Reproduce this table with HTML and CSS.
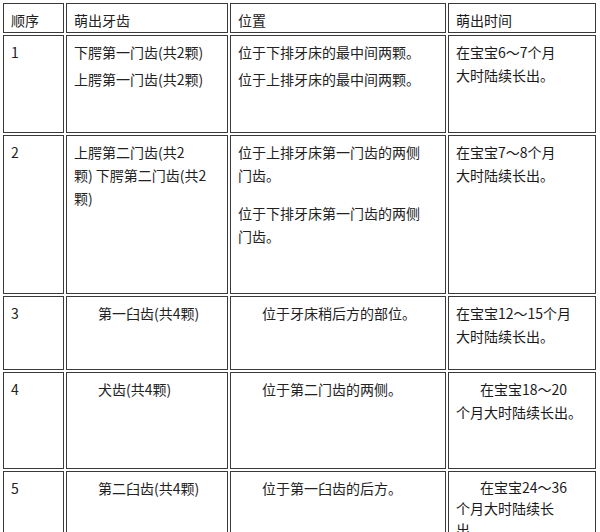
FILE: index.html
```html
<!DOCTYPE html>
<html lang="zh-CN">
<head>
<meta charset="utf-8">
<title>萌出牙齿</title>
<link rel="stylesheet" href="styles.css">
</head>
<body>
<table class="teeth">
  <colgroup>
    <col class="c1"><col class="c2"><col class="c3"><col class="c4">
  </colgroup>
  <tr class="r-head">
    <td>顺序</td>
    <td>萌出牙齿</td>
    <td>位置</td>
    <td>萌出时间</td>
  </tr>
  <tr class="r1">
    <td>1</td>
    <td><p class="p-tight">下腭第一门齿(共2颗)</p><p class="p-tight">上腭第一门齿(共2颗)</p></td>
    <td><p class="p-tight">位于下排牙床的最中间两颗。</p><p class="p-tight">位于上排牙床的最中间两颗。</p></td>
    <td>在宝宝6～7个月<br>大时陆续长出。</td>
  </tr>
  <tr class="r2">
    <td>2</td>
    <td>上腭第二门齿(共2<br>颗) 下腭第二门齿(共2<br>颗)</td>
    <td><p class="p-wide">位于上排牙床第一门齿的两侧<br>门齿。</p><p class="p-wide">位于下排牙床第一门齿的两侧<br>门齿。</p></td>
    <td>在宝宝7～8个月<br>大时陆续长出。</td>
  </tr>
  <tr class="r3">
    <td>3</td>
    <td class="ind">第一臼齿(共4颗)</td>
    <td class="ind">位于牙床稍后方的部位。</td>
    <td>在宝宝12～15个月<br>大时陆续长出。</td>
  </tr>
  <tr class="r4">
    <td>4</td>
    <td class="ind">犬齿(共4颗)</td>
    <td class="ind">位于第二门齿的两侧。</td>
    <td class="ind">在宝宝18～20<br>个月大时陆续长出。</td>
  </tr>
  <tr class="r5">
    <td>5</td>
    <td class="ind">第二臼齿(共4颗)</td>
    <td class="ind">位于第一臼齿的后方。</td>
    <td class="ind tight">在宝宝24～36<br>个月大时陆续长<br>出。</td>
  </tr>
</table>
</body>
</html>
```

FILE: styles.css
```css
html, body {
  margin: 0;
  padding: 0;
  background: #ffffff;
}

body {
  font-family: "Noto Sans CJK SC", "Microsoft YaHei", sans-serif;
  font-size: 14px;
  color: #222222;
  overflow: hidden;
}

.teeth {
  border-collapse: separate;
  border-spacing: 2px;
  table-layout: fixed;
  margin: 1px 0 0 1px;
  width: 595px;
}

.c1 { width: 61px; }
.c2 { width: 162px; }
.c3 { width: 216px; }
.c4 { width: 148px; }

.teeth td {
  box-sizing: border-box;
  border: 1px solid #3a3a3a;
  padding: 5px 6px 0 7px;
  vertical-align: top;
  line-height: 23px;
  white-space: nowrap;
  overflow: hidden;
}

.teeth p {
  margin: 0;
}

.teeth .p-tight + .p-tight {
  margin-top: 4px;
}

.teeth .p-wide + .p-wide {
  margin-top: 15px;
}

.teeth td.ind {
  text-indent: 24px;
}

.teeth td.tight {
  line-height: 21px;
}

.teeth td:nth-child(4) {
  color: #1a1a1a;
}

.r-head td { height: 30px; }
.r1 td { height: 98px; }
.r2 td { height: 159px; }
.r3 td { height: 74px; }
.r4 td { height: 97px; }
.r5 td { height: 97px; }
```
